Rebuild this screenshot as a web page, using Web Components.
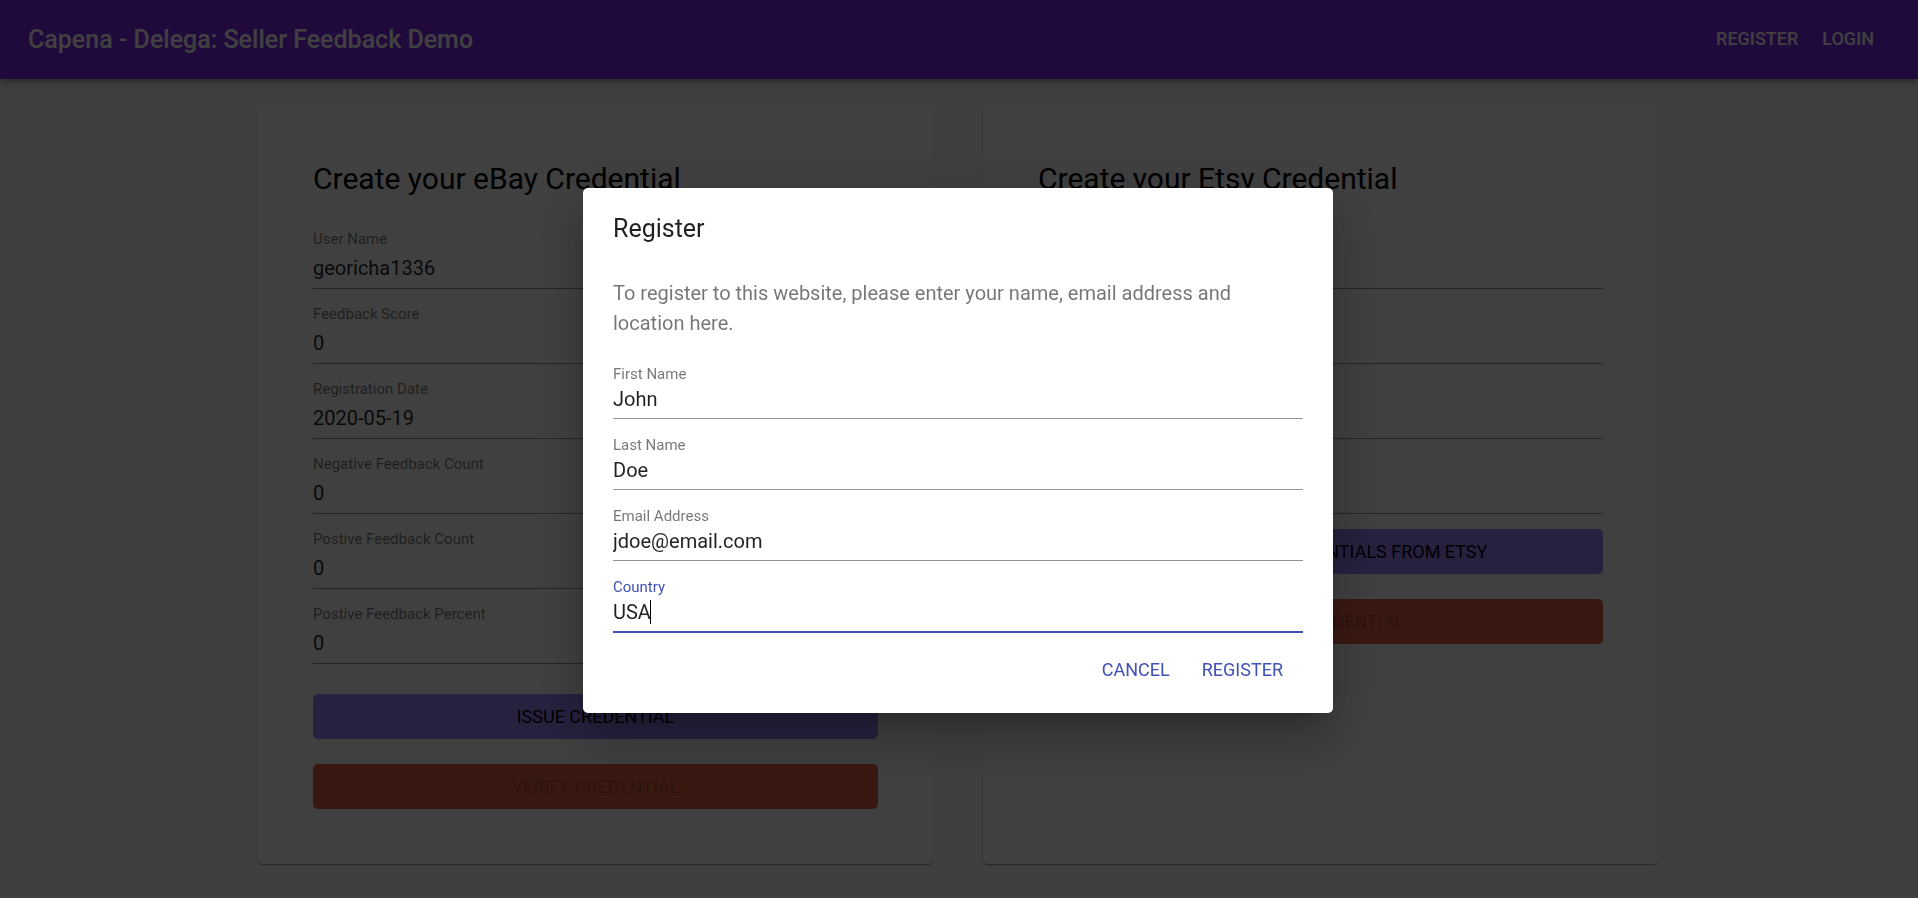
<!DOCTYPE html>
<html lang="en">
<head>
<meta charset="utf-8">
<title>Capena - Delega: Seller Feedback Demo</title>
<style>
  body { margin: 0; background: #fafafa; font-family: Roboto, "Liberation Sans", sans-serif; font-size: 20px; color: rgba(0, 0, 0, .87); }
</style>
</head>
<body>
<feedback-app></feedback-app>

<template id="app-tpl">
  <style>
    :host { display: block; min-height: 100vh; }
    .page { padding: 24px 26px 34px 24px; }
    main { display: grid; grid-template-columns: 1fr 1fr; gap: 50px; max-width: 1400px; margin: 0 auto; }
    p { margin: 0 0 10px; line-height: 30px; color: rgba(0, 0, 0, .54); }
  </style>
  <app-bar>Capena - Delega: Seller Feedback Demo
    <bar-link slot="nav" href="#register">REGISTER</bar-link>
    <bar-link slot="nav" href="#login">LOGIN</bar-link>
  </app-bar>
  <div class="page">
  <main>
    <credential-card>
      <span slot="title">Create your eBay Credential</span>
      <text-field label="User Name" value="georicha1336"></text-field>
      <text-field label="Feedback Score" value="0"></text-field>
      <text-field label="Registration Date" value="2020-05-19"></text-field>
      <text-field label="Negative Feedback Count" value="0"></text-field>
      <text-field label="Postive Feedback Count" value="0"></text-field>
      <text-field label="Postive Feedback Percent" value="0"></text-field>
      <action-button slot="actions" class="spaced">ISSUE CREDENTIAL</action-button>
      <action-button slot="actions" kind="verify" disabled>VERIFY CREDENTIAL</action-button>
    </credential-card>
    <credential-card>
      <span slot="title">Create your Etsy Credential</span>
      <text-field label="User Name" value=""></text-field>
      <text-field label="Feedback Count" value=""></text-field>
      <text-field label="Registration Date" value=""></text-field>
      <text-field label="Feedback Score" value=""></text-field>
      <action-button slot="actions">OBTAIN YOUR CREDENTIALS FROM ETSY</action-button>
      <action-button slot="actions" kind="verify" disabled>VERIFY CREDENTIAL</action-button>
    </credential-card>
  </main>
  </div>
  <modal-dialog>
    <span slot="title">Register</span>
    <p>To register to this website, please enter your name, email address and location here.</p>
    <text-field dense label="First Name" value="John"></text-field>
    <text-field dense label="Last Name" value="Doe"></text-field>
    <text-field dense label="Email Address" value="jdoe@email.com"></text-field>
    <text-field dense active label="Country" value="USA"></text-field>
    <flat-button slot="actions">CANCEL</flat-button>
    <flat-button slot="actions">REGISTER</flat-button>
  </modal-dialog>
</template>

<template id="bar-tpl">
  <style>
    :host { display: block; }
    header { display: flex; align-items: center; justify-content: space-between; height: 79px; box-sizing: border-box; padding: 0 44px 0 28px; background: #8128f0; color: #fff;
      box-shadow: 0 2px 5px -1px rgba(0,0,0,.2), 0 5px 6px rgba(0,0,0,.14), 0 1px 12px rgba(0,0,0,.12); }
    h1 { margin: 0; font-size: 25px; line-height: 40px; font-weight: 500; }
    nav { display: flex; gap: 24px; }
  </style>
  <header><h1><slot></slot></h1><nav><slot name="nav"></slot></nav></header>
</template>

<template id="link-tpl">
  <style>
    :host { display: block; }
    a { display: block; color: #fff; text-decoration: none; font-size: 18px; line-height: 30px; padding-bottom: 2px; font-weight: 500; }
  </style>
  <a><slot></slot></a>
</template>

<template id="card-tpl">
  <style>
    :host { display: block; }
    section { box-sizing: border-box; height: 100%; padding: 55px; background: #fff; border-radius: 5px;
      box-shadow: 0 2px 1px -1px rgba(0,0,0,.2), 0 1px 1px rgba(0,0,0,.14), 0 1px 3px rgba(0,0,0,.12); }
    h2 { margin: 0 0 14px; font-size: 30px; line-height: 42px; font-weight: 400; color: #000; }
    footer { display: flex; flex-direction: column; gap: 25px; padding-top: 15px; }
    ::slotted(.spaced) { padding-top: 15px; }
  </style>
  <section><h2><slot name="title"></slot></h2><slot></slot><footer><slot name="actions"></slot></footer></section>
</template>

<template id="field-tpl">
  <style>
    :host { display: block; --gap: 8px; --top: 16px; --tail: 8px; }
    :host([dense]) { --gap: 4px; --top: 17px; --tail: 7px; }
    .field { display: flex; flex-direction: column; gap: var(--gap); padding-top: var(--top); }
    label { font-size: 15px; line-height: 18px; color: rgba(0, 0, 0, .54); }
    input { box-sizing: content-box; width: 100%; height: 24px; margin: 0; padding: 0 0 var(--tail); border: 0; border-bottom: 1px solid rgba(0, 0, 0, .42); border-radius: 0; outline: 0; background: none; font: inherit; font-size: 20px; line-height: 24px; color: rgba(0, 0, 0, .87); }
    :host([active]) label { color: #3f51b5; }
    :host([active]) input { border-bottom: 2px solid #3f51b5; caret-color: transparent; background: linear-gradient(#000, #000) 37px 0 / 1px 24px no-repeat; }
  </style>
  <div class="field"><label for="box"></label><input id="box" type="text" autocomplete="off" spellcheck="false"></div>
</template>

<template id="action-tpl">
  <style>
    :host { display: block; }
    button { display: block; width: 100%; height: 45px; padding: 0; border: 0; border-radius: 5px; background: #9a84fa; color: #000; font: inherit; font-size: 18px; }
    :host([kind="verify"]) button { background: #e66248; }
    button:disabled { color: rgba(0, 0, 0, .26); }
  </style>
  <button type="button"><slot></slot></button>
</template>

<template id="flat-tpl">
  <style>
    :host { display: block; }
    button { display: block; height: 46px; padding: 0 10px; border: 0; border-radius: 5px; background: none; color: #3f51b5; font: inherit; font-size: 18px; }
  </style>
  <button type="button"><slot></slot></button>
</template>

<template id="dialog-tpl">
  <style>
    :host { position: fixed; inset: 0; box-sizing: border-box; padding: 2px 2px 0 0; display: flex; align-items: center; justify-content: center; background: rgba(0, 0, 0, .75); }
    .paper { box-sizing: border-box; width: 750px; max-width: calc(100% - 80px); background: #fff; border-radius: 5px;
      box-shadow: 0 14px 19px -9px rgba(0,0,0,.2), 0 30px 48px 4px rgba(0,0,0,.14), 0 11px 58px 10px rgba(0,0,0,.12); }
    h2 { margin: 0; padding: 21px 30px 19px; font-size: 25px; line-height: 40px; font-weight: 400; }
    .content { padding: 10px 30px; }
    footer { display: flex; justify-content: flex-end; gap: 12px; padding: 4px 40px 20px; }
  </style>
  <div class="paper" role="dialog" aria-modal="true" aria-labelledby="heading">
    <h2 id="heading"><slot name="title"></slot></h2>
    <div class="content"><slot></slot></div>
    <footer><slot name="actions"></slot></footer>
  </div>
</template>

<script>
  class TemplateElement extends HTMLElement {
    constructor() {
      super();
      const tpl = document.getElementById(this.constructor.template);
      this.attachShadow({ mode: 'open' }).append(tpl.content.cloneNode(true));
    }
  }
  class AppBar extends TemplateElement { static template = 'bar-tpl'; }
  class CredentialCard extends TemplateElement { static template = 'card-tpl'; }
  class FlatButton extends TemplateElement { static template = 'flat-tpl'; }
  class ModalDialog extends TemplateElement { static template = 'dialog-tpl'; }
  class FeedbackApp extends TemplateElement { static template = 'app-tpl'; }
  class BarLink extends TemplateElement {
    static template = 'link-tpl';
    connectedCallback() { this.shadowRoot.querySelector('a').href = this.getAttribute('href'); }
  }
  class ActionButton extends TemplateElement {
    static template = 'action-tpl';
    connectedCallback() { this.shadowRoot.querySelector('button').disabled = this.hasAttribute('disabled'); }
  }
  class TextField extends TemplateElement {
    static template = 'field-tpl';
    connectedCallback() {
      this.shadowRoot.querySelector('label').textContent = this.getAttribute('label');
      this.shadowRoot.querySelector('input').value = this.getAttribute('value') || '';
    }
  }
  customElements.define('app-bar', AppBar);
  customElements.define('bar-link', BarLink);
  customElements.define('credential-card', CredentialCard);
  customElements.define('text-field', TextField);
  customElements.define('action-button', ActionButton);
  customElements.define('flat-button', FlatButton);
  customElements.define('modal-dialog', ModalDialog);
  customElements.define('feedback-app', FeedbackApp);
</script>
</body>
</html>
